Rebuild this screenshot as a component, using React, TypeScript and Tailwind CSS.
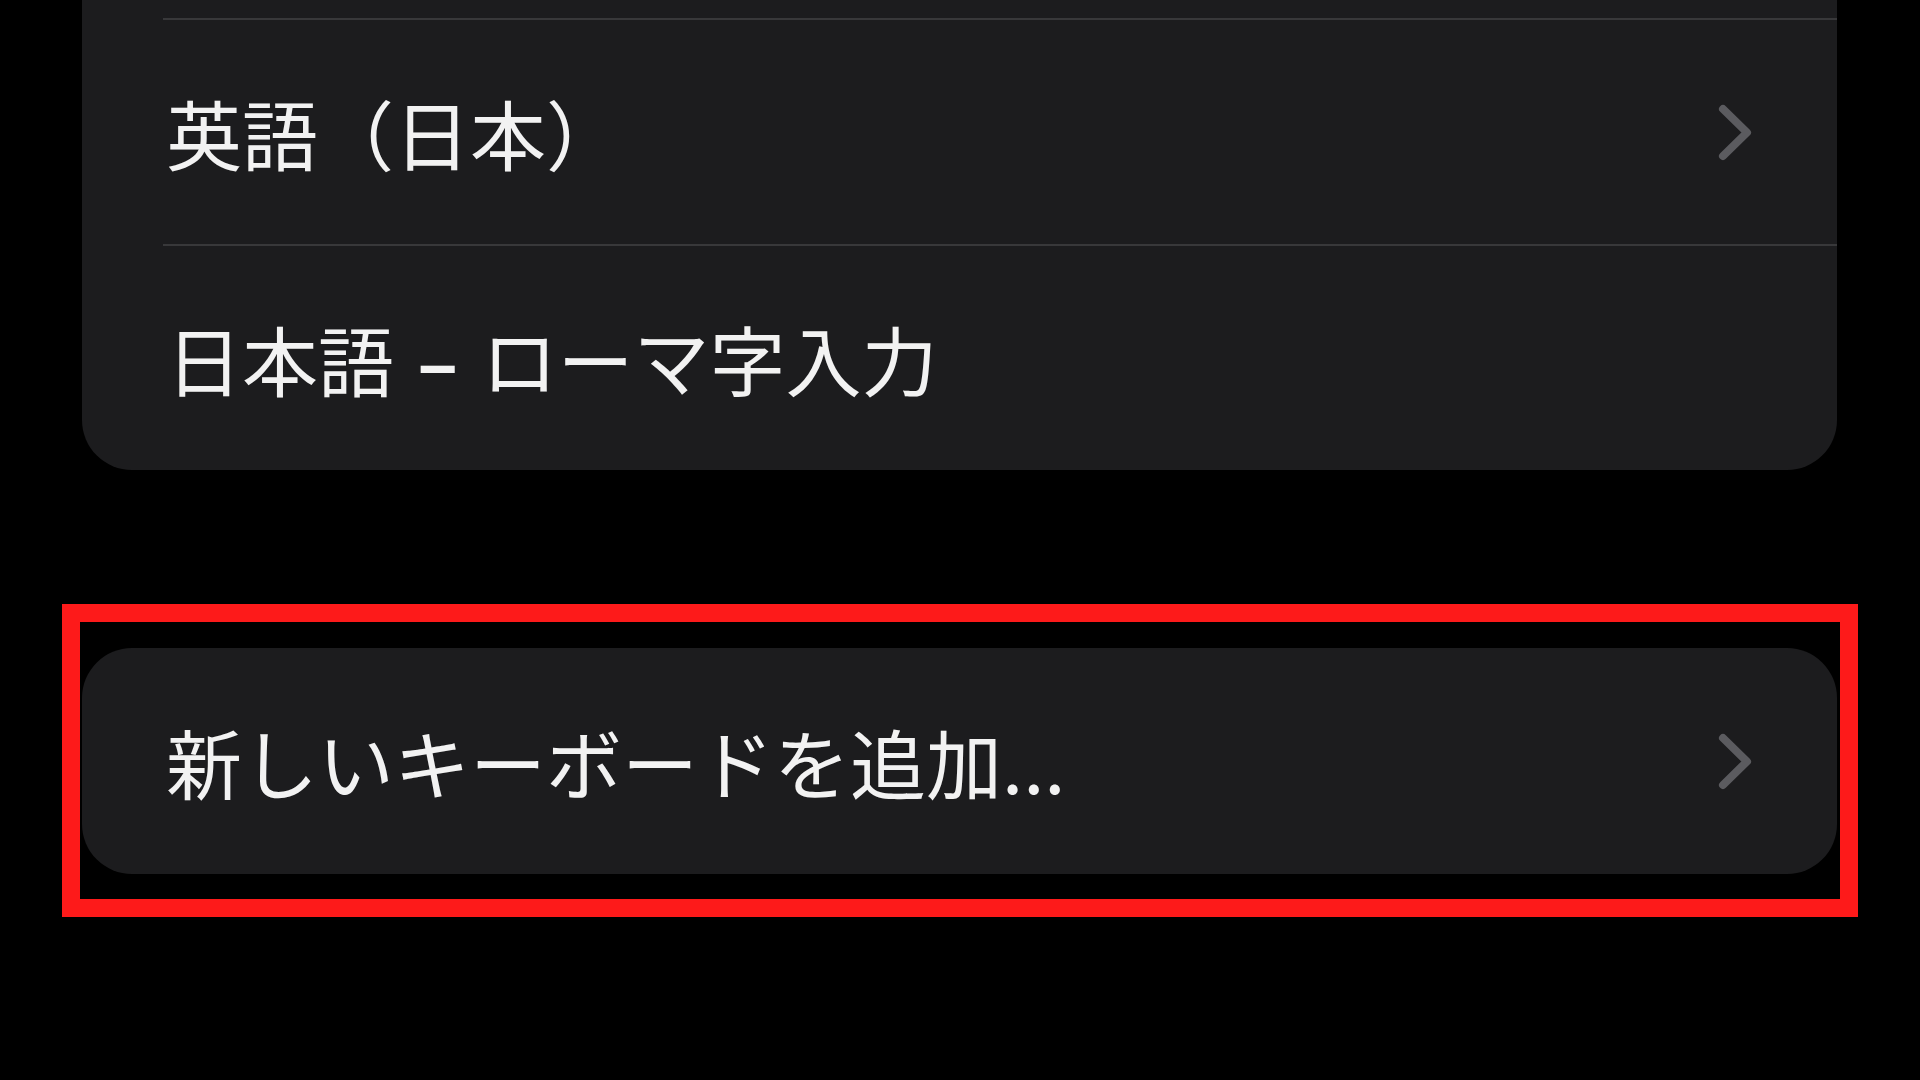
import React from 'react';

const Chevron = () => (
    <svg width="34" height="57" viewBox="0 0 34 57" fill="none" className="shrink-0">
        <polyline
            points="5,5 29,28.5 5,52"
            stroke="#5b5b5f"
            strokeWidth="8"
            strokeLinecap="round"
            strokeLinejoin="round"
        />
    </svg>
);

type RowProps = {
    label: React.ReactNode;
    chevron?: boolean;
    divider?: boolean;
};

function Row({ label, chevron = false, divider = false }: RowProps) {
    return (
        <div className="pl-[81px]">
            <div
                className={`h-[226px] flex items-center justify-between pr-[85px] ${divider ? 'border-t-2 border-[#38383a]' : ''}`}
            >
                <span className="pl-[3px] text-[76px] leading-none text-[#f2f2f2] whitespace-nowrap">
                    {label}
                </span>
                {chevron && <Chevron />}
            </div>
        </div>
    );
}

export default function App() {
    return (
        <div
            className="relative w-[1920px] h-[1080px] overflow-hidden bg-black"
            style={{ fontFamily: '"Noto Sans CJK JP", "Noto Sans", sans-serif' }}
        >
            <div className="flex flex-col pl-[82px] pr-[83px]">
                {/* keyboards list (scrolled, top row cut off) */}
                <div className="bg-[#1c1c1e] rounded-b-[50px] pt-[18px]">
                    <Row label="英語（日本）" chevron divider />
                    <Row
                        label={
                            <>
                                日本語 <span className="px-[6px] font-bold">–</span> ローマ字入力
                            </>
                        }
                        divider
                    />
                </div>

                {/* add keyboard */}
                <div className="mt-[178px] bg-[#1c1c1e] rounded-[50px]">
                    <Row label="新しいキーボードを追加..." chevron />
                </div>
            </div>

            {/* red annotation frame */}
            <div className="absolute left-[62px] top-[604px] w-[1796px] h-[313px] border-[18px] border-[#fd1a1a]" />
        </div>
    );
}
